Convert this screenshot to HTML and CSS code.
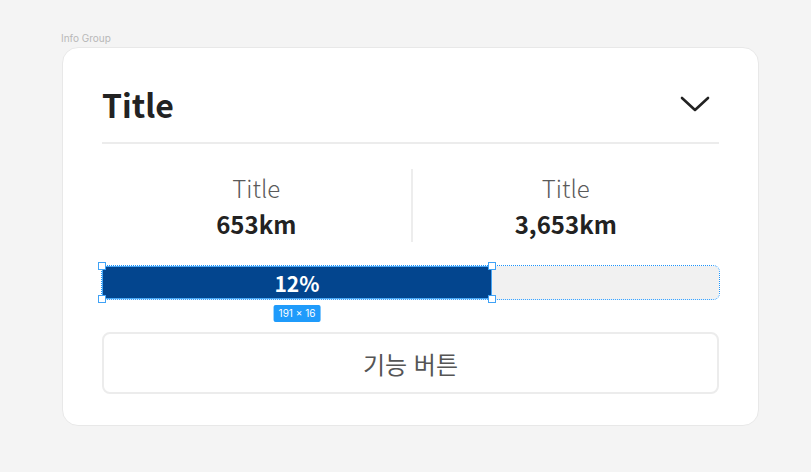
FILE: index.html
```html
<!DOCTYPE html>
<html lang="ko">
<head>
<meta charset="utf-8">
<title>Info Group</title>
<link rel="stylesheet" href="styles.css">
</head>
<body>
<div class="canvas">
  <div class="frame-label">Info Group</div>
  <section class="card">
    <header class="card-header">
      <h1 class="card-title">Title</h1>
      <svg class="chevron" width="30" height="16" viewBox="0 0 30 16" aria-hidden="true">
        <path d="M2 2 L15 14 L28 2" fill="none" stroke="#222" stroke-width="2.6" stroke-linecap="round" stroke-linejoin="round"/>
      </svg>
    </header>
    <div class="stats">
      <div class="stat">
        <div class="stat-label">Title</div>
        <div class="stat-value">653km</div>
      </div>
      <div class="stat">
        <div class="stat-label">Title</div>
        <div class="stat-value">3,653km</div>
      </div>
    </div>
    <div class="progress">
      <div class="progress-fill" style="width: 390px;">
        <span class="progress-text">12%</span>
        <span class="handle tl"></span>
        <span class="handle bl"></span>
        <span class="handle tr"></span>
        <span class="handle br"></span>
        <span class="size-badge">191 × 16</span>
      </div>
    </div>
    <button class="action-btn" type="button">기능 버튼</button>
  </section>
</div>
</body>
</html>
```

FILE: styles.css
```css
* { box-sizing: border-box; }

html, body {
  margin: 0;
  padding: 0;
  background: #f4f4f4;
}

body {
  font-family: "Noto Sans CJK KR", "Noto Sans", sans-serif;
  color: #222;
}

.canvas {
  padding: 32px 0 0 61px;
}

.frame-label {
  font-family: Inter, "Noto Sans", sans-serif;
  font-size: 10px;
  line-height: 12px;
  color: #b8b8b8;
  margin-bottom: 3px;
}

.card {
  margin-left: 1px;
  width: 697px;
  height: 379px;
  background: #fff;
  border: 1px solid #e8e8e8;
  border-radius: 16px;
  padding: 0 39px 31px;
  display: flex;
  flex-direction: column;
}

.card-header {
  display: flex;
  align-items: center;
  justify-content: space-between;
  height: 96px;
  padding-top: 18px;
  border-bottom: 2px solid #ececec;
}

.card-title {
  margin: 0;
  font-size: 32px;
  font-weight: 700;
  line-height: 40px;
  color: #222;
}

.chevron {
  margin-right: 9px;
  display: block;
}

.stats {
  display: grid;
  grid-template-columns: 1fr 1fr;
  margin-top: 25px;
  height: 74px;
}

.stat {
  display: flex;
  flex-direction: column;
  align-items: center;
  padding-top: 1px;
}

.stat + .stat {
  border-left: 2px solid #ededed;
}

.stat-label {
  font-size: 24px;
  line-height: 36px;
  color: #5a5a5a;
  font-weight: 300;
}

.stat-value {
  font-size: 24px;
  line-height: 36px;
  font-weight: 700;
  color: #222;
}

.progress {
  margin-top: 24px;
  height: 33px;
  background: #f1f1f1;
  border-radius: 0 6px 6px 0;
  outline: 1px dotted #1e94fa;
  position: relative;
}

.progress-fill {
  position: relative;
  height: 33px;
  background: #03458e;
  border: 1px solid #47a6f5;
  display: flex;
  align-items: center;
  justify-content: center;
}

.progress-text {
  font-size: 21px;
  font-weight: 700;
  color: #fff;
  line-height: 30px;
}

.handle {
  position: absolute;
  width: 8px;
  height: 8px;
  background: #fff;
  border: 1px solid #3fa2f6;
}

.handle.tl { left: -5px; top: -5px; }
.handle.bl { left: -5px; bottom: -5px; }
.handle.tr { right: -5px; top: -5px; }
.handle.br { right: -5px; bottom: -5px; }

.size-badge {
  position: absolute;
  top: 38px;
  left: 50%;
  transform: translateX(-50%);
  background: #1f9bfb;
  color: #fff;
  font-family: Inter, "Noto Sans", sans-serif;
  font-size: 10px;
  line-height: 17px;
  padding: 0 5px;
  border-radius: 2px;
  white-space: nowrap;
}

.action-btn {
  margin-top: 33px;
  height: 62px;
  width: 100%;
  background: #fff;
  border: 2px solid #ececec;
  border-radius: 8px;
  font-family: "Noto Sans CJK KR", "Noto Sans", sans-serif;
  font-size: 24px;
  font-weight: 400;
  color: #555;
  cursor: pointer;
}
```
